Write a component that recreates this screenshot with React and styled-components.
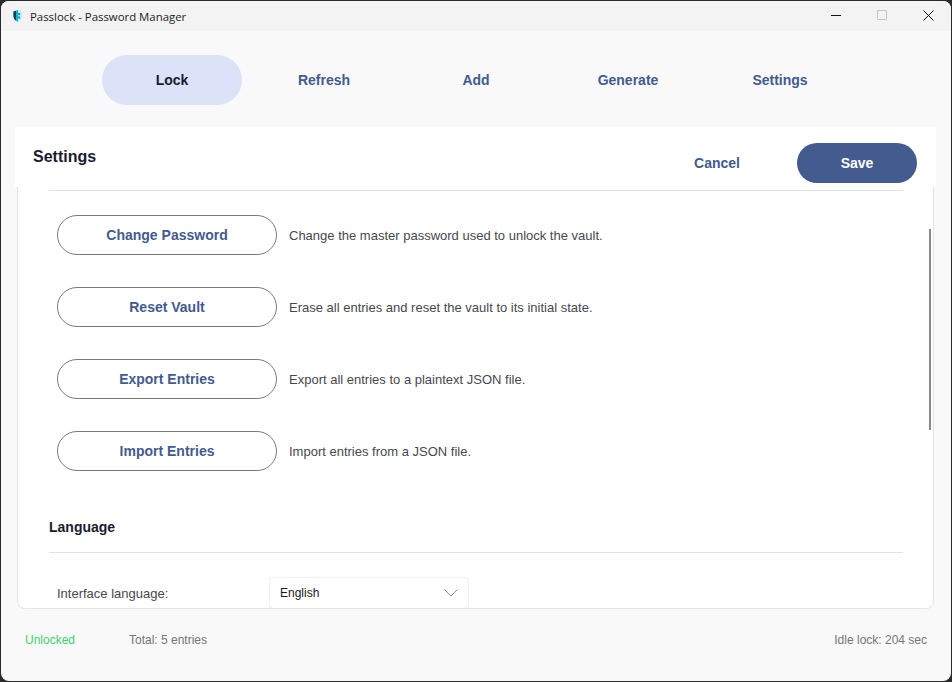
import React from "react";
import styled, { createGlobalStyle } from "styled-components";

const GlobalStyle = createGlobalStyle`
    html, body {
        margin: 0;
        padding: 0;
        background: #2b2b2b;
    }
    * {
        box-sizing: border-box;
    }
`;

const navItems = ["Lock", "Refresh", "Add", "Generate", "Settings"];

const actions = [
    { label: "Change Password", text: "Change the master password used to unlock the vault." },
    { label: "Reset Vault", text: "Erase all entries and reset the vault to its initial state." },
    { label: "Export Entries", text: "Export all entries to a plaintext JSON file." },
    { label: "Import Entries", text: "Import entries from a JSON file." },
];

const App = () => {
    return (
        <>
            <GlobalStyle />
            <Window>
                <TitleBar>
                    <TitleLeft>
                        <svg width="10" height="12" viewBox="0 0 10 12">
                            <path d="M5 0 L9.5 1.5 V6 C9.5 9 7.5 11 5 12 Z" fill="#cdeef4" />
                            <path d="M5 0 L0.5 1.5 V6 C0.5 9 2.5 11 5 12 Z" fill="#14b4ca" />
                            <path d="M3 0.7 L0.5 1.5 V6 C0.5 8 1.5 9.6 3 10.7 Z" fill="#16405c" />
                            <rect x="5" y="3" width="2.2" height="2.2" fill="#12a4b8" />
                            <rect x="5" y="6.4" width="2.2" height="2.2" fill="#12a4b8" />
                        </svg>
                        <TitleText>Passlock - Password Manager</TitleText>
                    </TitleLeft>
                    <WindowControls>
                        <ControlSlot>
                            <svg width="10" height="10" viewBox="0 0 10 10">
                                <path d="M0 5.5 H10" stroke="#111" strokeWidth="1" />
                            </svg>
                        </ControlSlot>
                        <ControlSlot>
                            <svg width="10" height="10" viewBox="0 0 10 10">
                                <rect x="0.5" y="0.5" width="9" height="9" rx="0.5" fill="none" stroke="#c4c4c4" />
                            </svg>
                        </ControlSlot>
                        <ControlSlot>
                            <svg width="11" height="11" viewBox="0 0 11 11">
                                <path d="M0.5 0.5 L10.5 10.5 M10.5 0.5 L0.5 10.5" stroke="#111" strokeWidth="1" />
                            </svg>
                        </ControlSlot>
                    </WindowControls>
                </TitleBar>

                <Nav>
                    {navItems.map((item, idx) => (
                        <NavItem key={item} $active={idx === 0}>
                            {item}
                        </NavItem>
                    ))}
                </Nav>

                <Main>
                    <PanelHeader>
                        <PanelTitle>Settings</PanelTitle>
                        <HeaderButtons>
                            <CancelButton>Cancel</CancelButton>
                            <SaveButton>Save</SaveButton>
                        </HeaderButtons>
                    </PanelHeader>
                    <Panel>
                        <Divider />
                        <ActionList>
                            {actions.map((action) => (
                                <ActionRow key={action.label}>
                                    <OutlineButton>{action.label}</OutlineButton>
                                    <ActionText>{action.text}</ActionText>
                                </ActionRow>
                            ))}
                        </ActionList>
                        <SectionTitle>Language</SectionTitle>
                        <Divider />
                        <LanguageRow>
                            <FieldLabel>Interface language:</FieldLabel>
                            <Select>
                                English
                                <svg width="14" height="8" viewBox="0 0 14 8">
                                    <path d="M0.5 0.5 L7 7 L13.5 0.5" fill="none" stroke="#8f8f8f" strokeWidth="1" />
                                </svg>
                            </Select>
                        </LanguageRow>
                        <ScrollThumb />
                    </Panel>
                </Main>

                <StatusBar>
                    <StatusLeft>
                        <Unlocked>Unlocked</Unlocked>
                        <StatusText>Total: 5 entries</StatusText>
                    </StatusLeft>
                    <StatusText>Idle lock: 204 sec</StatusText>
                </StatusBar>
            </Window>
        </>
    );
};

// 창 전체
const Window = styled.div`
    width: 950px;
    height: 680px;
    margin: 1px;
    border-radius: 8px;
    overflow: hidden;
    display: flex;
    flex-direction: column;
    background: #f9f9fa;
    font-family: "Liberation Sans", Arial, sans-serif;
`;

const TitleBar = styled.div`
    height: 30px;
    flex: none;
    display: flex;
    justify-content: space-between;
    align-items: center;
    background: #f3f3f3;
`;

const TitleLeft = styled.div`
    display: flex;
    align-items: center;
    gap: 7px;
    padding-left: 12px;
`;

const TitleText = styled.span`
    font-family: "Open Sans", "Noto Sans", sans-serif;
    font-size: 11.4px;
    color: #1c1c1c;
`;

const WindowControls = styled.div`
    display: flex;
`;

const ControlSlot = styled.div`
    width: 46px;
    height: 30px;
    padding-bottom: 2px;
    display: flex;
    align-items: center;
    justify-content: center;
`;

const Nav = styled.nav`
    height: 96px;
    flex: none;
    display: flex;
    gap: 12px;
    padding: 24px 0 0 101px;
`;

const NavItem = styled.div`
    width: 140px;
    height: 50px;
    border-radius: 25px;
    display: flex;
    align-items: center;
    justify-content: center;
    font-size: 14px;
    font-weight: 700;
    color: ${(props) => (props.$active ? "#1a1c2e" : "#435b8e")};
    background: ${(props) => (props.$active ? "#dce2f8" : "transparent")};
`;

const Main = styled.div`
    flex: 1;
    min-height: 0;
    display: flex;
    flex-direction: column;
    margin: 0 15px 0 14px;
`;

const PanelHeader = styled.div`
    height: 60px;
    flex: none;
    display: flex;
    justify-content: space-between;
    background: #ffffff;
    padding: 16px 19px 0 18px;
`;

const PanelTitle = styled.h2`
    margin: 4px 0 0;
    font-size: 16px;
    line-height: 20px;
    font-weight: 700;
    color: #1a1c2e;
`;

const HeaderButtons = styled.div`
    display: flex;
    align-items: flex-start;
    gap: 20px;
`;

const CancelButton = styled.button`
    width: 120px;
    height: 40px;
    border: none;
    background: transparent;
    font-family: inherit;
    font-size: 14px;
    font-weight: 700;
    color: #435b8e;
`;

const SaveButton = styled.button`
    width: 120px;
    height: 40px;
    border: none;
    border-radius: 20px;
    background: #435b8e;
    font-family: inherit;
    font-size: 14px;
    font-weight: 700;
    color: #ffffff;
`;

// 스크롤 영역 패널
const Panel = styled.div`
    position: relative;
    height: 422px;
    flex: none;
    margin: 0 2px;
    padding: 3px 30px 0 31px;
    background: #ffffff;
    border: 1px solid #e4e5e7;
    border-top: none;
    border-radius: 0 0 8px 8px;
    overflow: hidden;
`;

const Divider = styled.div`
    height: 1px;
    background: #e1e2e4;
`;

const ActionList = styled.div`
    display: flex;
    flex-direction: column;
    gap: 32px;
    padding: 24px 0 0 8px;
`;

const ActionRow = styled.div`
    display: flex;
    align-items: center;
    gap: 12px;
`;

const OutlineButton = styled.button`
    width: 220px;
    height: 40px;
    flex: none;
    border: 1px solid #79797c;
    border-radius: 20px;
    background: #ffffff;
    font-family: inherit;
    font-size: 14px;
    font-weight: 700;
    color: #435b8e;
`;

const ActionText = styled.span`
    font-size: 13px;
    color: #46484f;
`;

const SectionTitle = styled.h3`
    margin: 48px 0 17px;
    font-size: 14px;
    line-height: 16px;
    font-weight: 700;
    color: #1a1c2e;
`;

const LanguageRow = styled.div`
    display: flex;
    align-items: flex-start;
    padding: 24px 0 0 8px;
`;

const FieldLabel = styled.span`
    width: 212px;
    flex: none;
    padding-top: 9px;
    font-size: 13px;
    color: #46484f;
`;

const Select = styled.div`
    width: 200px;
    height: 32px;
    display: flex;
    align-items: center;
    justify-content: space-between;
    padding: 0 10px 0 10px;
    border: 1px solid #f0f0f1;
    border-bottom-color: #d4d4d6;
    border-radius: 4px;
    background: #ffffff;
    font-size: 12px;
    color: #1a1a1a;
`;

// 스크롤바 막대
const ScrollThumb = styled.div`
    position: absolute;
    top: 42px;
    right: 2px;
    width: 2px;
    height: 201px;
    background: #8a8a8a;
`;

const StatusBar = styled.div`
    height: 73px;
    flex: none;
    display: flex;
    justify-content: space-between;
    padding: 25px 24px 0 24px;
`;

const StatusLeft = styled.div`
    display: flex;
`;

const Unlocked = styled.span`
    width: 104px;
    font-size: 12px;
    color: #3fcf6c;
`;

const StatusText = styled.span`
    font-size: 12px;
    color: #73757a;
`;

export default App;
